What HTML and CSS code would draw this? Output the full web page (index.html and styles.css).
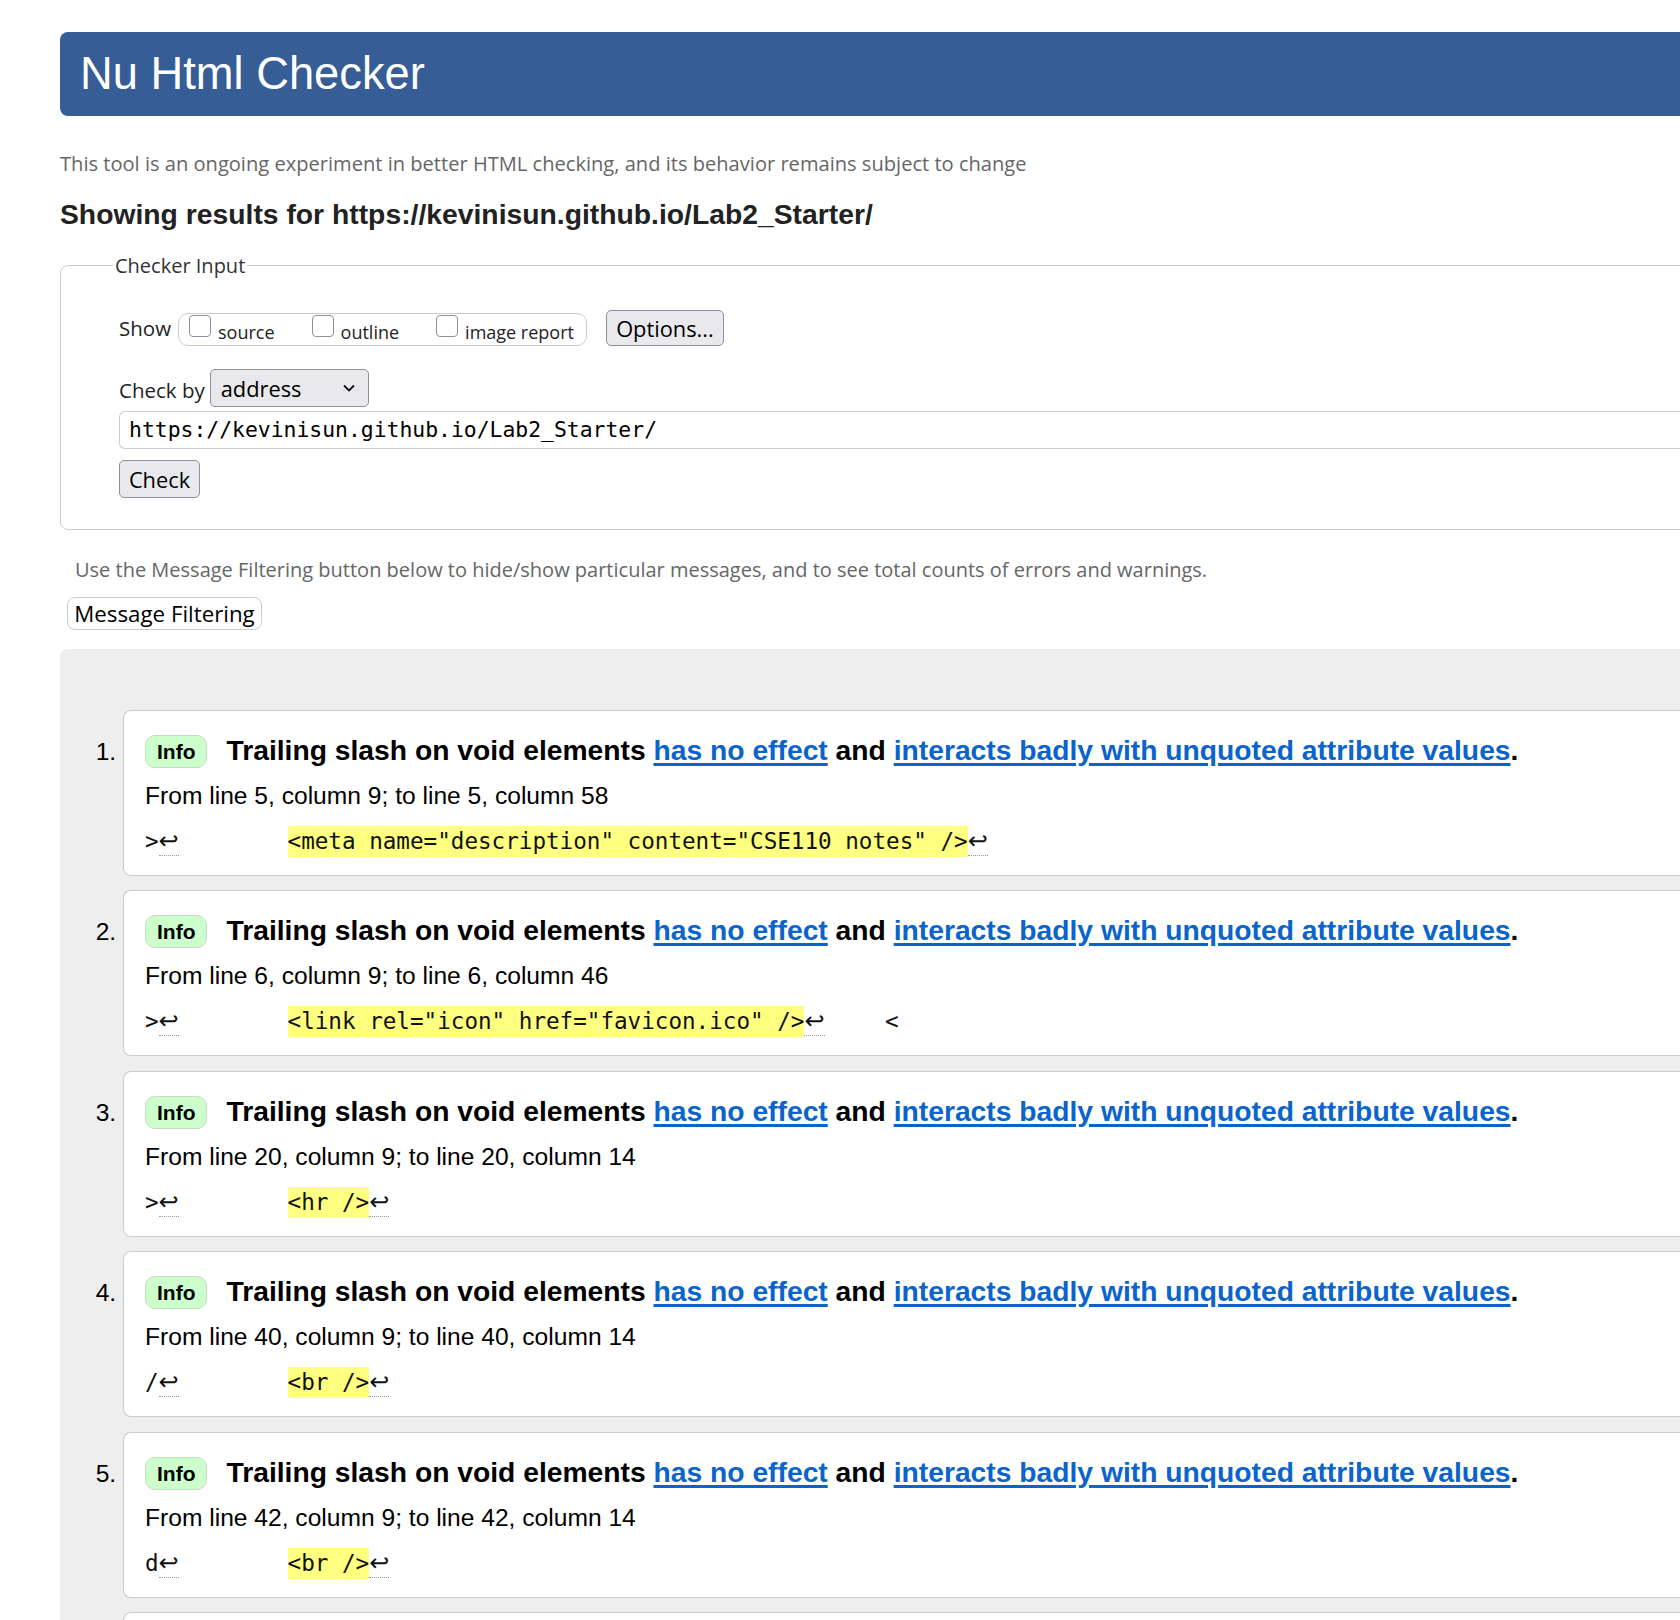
FILE: index.html
```html
<!DOCTYPE html>
<html lang="en">
<head>
<meta charset="utf-8">
<title>Showing results for https://kevinisun.github.io/Lab2_Starter/ - Nu Html Checker</title>
<link rel="stylesheet" href="styles.css">
</head>
<body>
<div class="page">
  <h1 class="banner">Nu Html Checker</h1>
  <p class="intro">This tool is an ongoing experiment in better HTML checking, and its behavior remains subject to change</p>
  <h2 class="results-for">Showing results for https://kevinisun.github.io/Lab2_Starter/</h2>

  <fieldset class="checker">
    <legend class="legend">Checker Input</legend>
    <div class="row row-show">
      <span class="lbl">Show</span>
      <span class="show-group">
        <label class="opt"><span class="cb"></span><span class="opt-text">source</span></label>
        <label class="opt"><span class="cb"></span><span class="opt-text">outline</span></label>
        <label class="opt"><span class="cb"></span><span class="opt-text">image report</span></label>
      </span>
      <span class="btn btn-options">Options...</span>
    </div>
    <div class="row row-checkby">
      <span class="lbl">Check by</span>
      <span class="select">
        <span class="select-text">address</span>
        <svg class="chev" width="14" height="10" viewBox="0 0 14 10"><path d="M2 2.5 L7 7.5 L12 2.5" fill="none" stroke="#111" stroke-width="1.8"/></svg>
      </span>
    </div>
    <div class="url">https://kevinisun.github.io/Lab2_Starter/</div>
    <div class="row-check"><span class="btn btn-check">Check</span></div>
  </fieldset>

  <p class="filter-note">Use the Message Filtering button below to hide/show particular messages, and to see total counts of errors and warnings.</p>
  <span class="btn-filter">Message Filtering</span>

  <div class="results">
    <ol class="messages">
      <li class="msg">
        <p class="msg-title"><span class="badge">Info</span><span class="msg-text">Trailing slash on void elements <a href="#">has no effect</a> and <a href="#">interacts badly with unquoted attribute values</a>.</span></p>
        <p class="msg-loc">From line 5, column 9; to line 5, column 58</p>
        <p class="extract">&gt;<span class="lf">↩</span>        <mark class="hl">&lt;meta name="description" content="CSE110 notes" /&gt;</mark><span class="lf">↩</span></p>
      </li>
      <li class="msg">
        <p class="msg-title"><span class="badge">Info</span><span class="msg-text">Trailing slash on void elements <a href="#">has no effect</a> and <a href="#">interacts badly with unquoted attribute values</a>.</span></p>
        <p class="msg-loc">From line 6, column 9; to line 6, column 46</p>
        <p class="extract">&gt;<span class="lf">↩</span>        <mark class="hl">&lt;link rel="icon" href="favicon.ico" /&gt;</mark><span class="lf">↩</span>    <span class="next">&lt;</span></p>
      </li>
      <li class="msg">
        <p class="msg-title"><span class="badge">Info</span><span class="msg-text">Trailing slash on void elements <a href="#">has no effect</a> and <a href="#">interacts badly with unquoted attribute values</a>.</span></p>
        <p class="msg-loc">From line 20, column 9; to line 20, column 14</p>
        <p class="extract">&gt;<span class="lf">↩</span>        <mark class="hl">&lt;hr /&gt;</mark><span class="lf">↩</span></p>
      </li>
      <li class="msg">
        <p class="msg-title"><span class="badge">Info</span><span class="msg-text">Trailing slash on void elements <a href="#">has no effect</a> and <a href="#">interacts badly with unquoted attribute values</a>.</span></p>
        <p class="msg-loc">From line 40, column 9; to line 40, column 14</p>
        <p class="extract">/<span class="lf">↩</span>        <mark class="hl">&lt;br /&gt;</mark><span class="lf">↩</span></p>
      </li>
      <li class="msg">
        <p class="msg-title"><span class="badge">Info</span><span class="msg-text">Trailing slash on void elements <a href="#">has no effect</a> and <a href="#">interacts badly with unquoted attribute values</a>.</span></p>
        <p class="msg-loc">From line 42, column 9; to line 42, column 14</p>
        <p class="extract">d<span class="lf">↩</span>        <mark class="hl">&lt;br /&gt;</mark><span class="lf">↩</span></p>
      </li>
      <li class="msg">
        <p class="msg-title"><span class="badge">Info</span><span class="msg-text">Trailing slash on void elements <a href="#">has no effect</a> and <a href="#">interacts badly with unquoted attribute values</a>.</span></p>
        <p class="msg-loc">From line 44, column 9; to line 44, column 14</p>
        <p class="extract">d<span class="lf">↩</span>        <mark class="hl">&lt;br /&gt;</mark><span class="lf">↩</span></p>
      </li>
    </ol>
  </div>
</div>
</body>
</html>
```

FILE: styles.css
```css
html, body {
  margin: 0;
  padding: 0;
  overflow: hidden;
  background: #fff;
}
body {
  font-family: "Open Sans", "Noto Sans", sans-serif;
  color: #222;
}
.page {
  padding: 32px 0 0 60px;
  width: 1800px;
}
.banner {
  margin: 0;
  height: 84px;
  padding-left: 20px;
  background: #365d95;
  border-radius: 8px 0 0 8px;
  color: #fff;
  font: normal 45.3px/84px "Liberation Sans", Arial, sans-serif;
}
.intro {
  margin: 34px 0 0;
  font-size: 20.1px;
  line-height: 27px;
  color: #666;
}
.results-for {
  margin: 21px 0 0;
  font: bold 28.3px/32px "Liberation Sans", Arial, sans-serif;
  color: #222;
}
.checker {
  margin: 22px 0 0;
  border: 1px solid #ccc;
  border-radius: 8px;
  padding: 0 0 31px 58px;
}
.legend {
  font-size: 20px;
  line-height: 27px;
  color: #333;
  padding: 0 2px;
  margin-left: -6px;
}
.row {
  display: flex;
  align-items: center;
}
.row-show {
  margin-top: 31px;
  height: 36px;
}
.lbl {
  font-size: 20.5px;
  color: #222;
  margin-right: 7px;
}
.show-group {
  display: flex;
  align-items: center;
  height: 31px;
  border: 1px solid #ccc;
  border-radius: 10px;
  padding: 0 12px 0 10px;
  margin-top: 3px;
}
.opt {
  display: flex;
  align-items: center;
  margin-right: 37px;
}
.opt:last-child {
  margin-right: 0;
}
.cb {
  width: 20px;
  height: 20px;
  border: 1px solid #8f8f9d;
  border-radius: 4px;
  margin-right: 7px;
  margin-top: -8px;
  background: #fff;
}
.opt-text {
  font-size: 18px;
  color: #222;
  margin-top: 4px;
}
.btn {
  display: inline-flex;
  align-items: center;
  justify-content: center;
  box-sizing: border-box;
  background: #e9e9ed;
  border: 1px solid #8f8f9d;
  border-radius: 5px;
  font-size: 21.8px;
  color: #000;
}
.btn-options {
  margin-left: 19px;
  width: 118px;
  height: 36px;
}
.row-checkby {
  margin-top: 23px;
  height: 38px;
}
.row-checkby .lbl {
  margin-right: 5px;
  margin-top: 4px;
}
.select {
  box-sizing: border-box;
  display: flex;
  align-items: center;
  width: 159px;
  height: 38px;
  background: #e9e9ed;
  border: 1px solid #8f8f9d;
  border-radius: 5px;
  padding-left: 10px;
}
.select-text {
  font-size: 21.8px;
  color: #000;
  flex: 1;
}
.chev {
  margin-right: 12px;
}
.url {
  box-sizing: border-box;
  margin-top: 4px;
  height: 38px;
  border: 1px solid #ccc;
  border-right: none;
  border-radius: 6px 0 0 6px;
  padding-left: 9px;
  font: 21.4px/36px "DejaVu Sans Mono", monospace;
  color: #000;
}
.row-check {
  margin-top: 11px;
  height: 38px;
}
.btn-check {
  width: 81px;
  height: 38px;
}
.filter-note {
  margin: 26px 0 0;
  padding-left: 15px;
  font-size: 20px;
  line-height: 27px;
  color: #666;
}
.btn-filter {
  display: inline-flex;
  align-items: center;
  justify-content: center;
  box-sizing: border-box;
  margin: 13.5px 0 0 7px;
  width: 195px;
  height: 33px;
  border: 1px solid #ccc;
  border-radius: 8px;
  background: #fff;
  font-size: 22.3px;
  color: #000;
}
.results {
  margin-top: 19px;
  background: #eee;
  border-radius: 8px 0 0 0;
  padding: 61px 0 40px 0;
}
.messages {
  margin: 0;
  padding: 0 0 0 63px;
  font: 24.6px "Liberation Sans", Arial, sans-serif;
  color: #000;
}
.msg {
  background: #fff;
  border: 1px solid #ccc;
  border-right: none;
  border-radius: 8px 0 0 8px;
  padding: 19px 0 17px 21px;
  margin-bottom: 14.5px;
}
.msg p {
  margin: 0;
}
.msg-title {
  line-height: 40px;
  font-weight: bold;
  font-size: 28.25px;
}
.msg::marker {
  font-weight: normal;
}
.badge {
  display: inline-block;
  box-sizing: border-box;
  height: 33px;
  line-height: 31px;
  padding: 0 11px;
  vertical-align: 1px;
  background: #ccffcc;
  border: 1px solid #c3dcc3;
  border-radius: 10px;
  font-size: 21px;
  margin-right: 19px;
}
.msg-text a {
  color: #0a64cc;
  text-decoration: underline;
  text-decoration-thickness: 3px;
  text-underline-offset: 3px;
}
.msg-loc {
  margin-top: 9px !important;
  line-height: 34px;
  font-size: 24.6px;
}
.extract {
  margin-top: 11px !important;
  font: 22.6px/34px "DejaVu Sans Mono", monospace;
  white-space: pre;
  color: #111;
}
.hl {
  background: #ffff80;
  color: #111;
  padding: 2px 0 3px;
}
.lf {
  font-family: "DejaVu Sans", sans-serif;
  font-size: 24px;
  border-bottom: 1px dotted #999;
}
.next {
  margin-left: 6px;
}
```
